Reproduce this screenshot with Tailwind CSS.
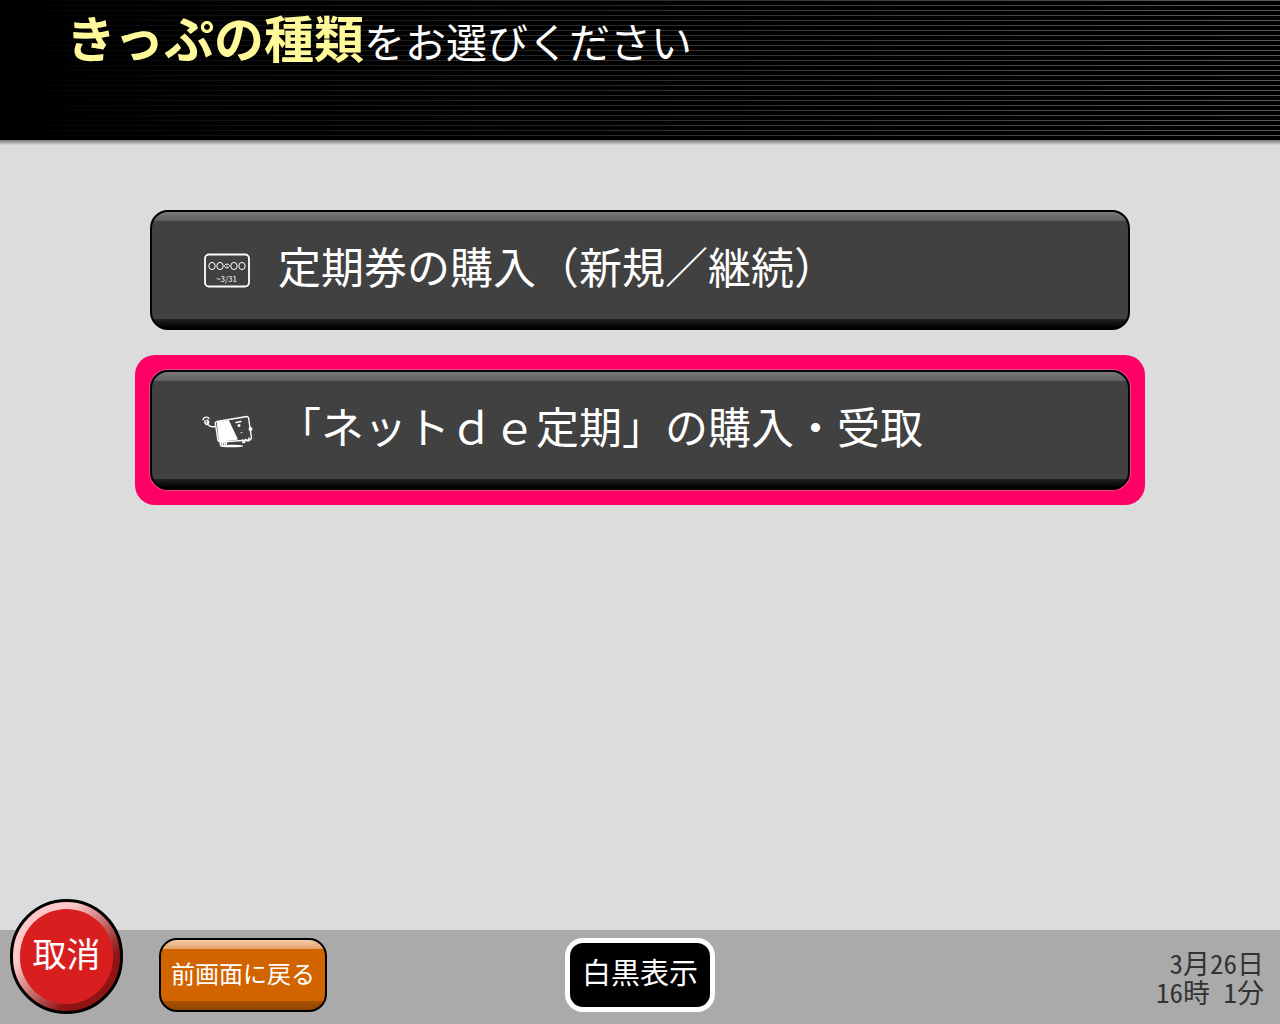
<!DOCTYPE html>
<html lang="ja">
<head>
<meta charset="utf-8">
<meta name="viewport" content="width=device-width, initial-scale=1">
<title>きっぷの種類</title>
<script src="https://cdn.jsdelivr.net/npm/@tailwindcss/browser@4"></script>
</head>
<body class="flex min-h-screen flex-col bg-[#dcdcdc] font-['Noto_Sans_CJK_JP',sans-serif] text-white">

<header class="h-[140px] bg-black bg-[linear-gradient(to_right,#000,transparent),repeating-linear-gradient(to_bottom,#5a5a5a_0px,#5a5a5a_1px,#000_1px,#000_5px)] pl-[66px]">
  <h1 class="text-[41px] leading-[72px] whitespace-nowrap"><strong class="text-[50px] font-bold text-[#fff999]">きっぷの種類</strong>をお選びください</h1>
</header>
<div class="h-[5px] bg-linear-to-b from-[#777] to-[#dcdcdc]"></div>

<main class="flex flex-1 flex-col gap-[10px] px-[135px] pt-[50px]">
  <div class="p-[15px]">
    <button type="button" class="flex h-[120px] w-full items-center rounded-[18px] border-2 border-black bg-[linear-gradient(to_bottom,#7a7a7a_0px,#5e5e5e_9px,#414141_9px,#414141_107px,#222_107px,#000_116px)] pl-[38px] text-[43px] whitespace-nowrap">
      <svg class="h-[60px] w-[80px] shrink-0" viewBox="0 0 80 60" fill="none" stroke="#fff" aria-hidden="true">
        <rect x="15" y="14.500" width="44" height="32" rx="4" stroke-width="1.800"/>
        <g stroke-width="1">
          <ellipse cx="22" cy="26" rx="3.200" ry="3.600"/>
          <ellipse cx="30" cy="26" rx="3.200" ry="3.600"/>
          <ellipse cx="44" cy="26" rx="3.200" ry="3.600"/>
          <ellipse cx="52" cy="26" rx="3.200" ry="3.600"/>
        </g>
        <path d="M34 26l2.300-2.300v1.300h1.400v-1.300L40 26l-2.300 2.300V27h-1.400v1.300z" stroke-width=".7"/>
        <text x="26" y="42" font-size="8" fill="#fff" stroke="none" font-family="'Noto Sans CJK JP', sans-serif">~3/31</text>
      </svg>
      <span class="-mt-[10px] pl-[8px]">定期券の購入（新規／継続）</span>
    </button>
  </div>

  <div class="rounded-[20px] bg-[#ff0066] p-[15px]">
    <button type="button" class="flex h-[120px] w-full items-center rounded-[18px] border-2 border-black bg-[linear-gradient(to_bottom,#7a7a7a_0px,#5e5e5e_9px,#414141_9px,#414141_107px,#222_107px,#000_116px)] pl-[38px] text-[43px] whitespace-nowrap ring-1 ring-[#e05088]">
      <svg class="h-[60px] w-[80px] shrink-0" viewBox="0 0 80 60" fill="none" stroke="#fff" stroke-width="1.400" stroke-linecap="round" stroke-linejoin="round" aria-hidden="true">
        <path d="M27 21.500L57 16.500l1.500 1L61.500 38l-1.500 2-30 2-2-1.500-2.800-18z"/>
        <path d="M27.500 22.500L38.500 21l8.500 18-17.500 2z" fill="#fff"/>
        <path d="M25 26.500c-4 1-7-.5-8-4.500M13 19.500c1-3 5-3 6-1M15 20.500c-1 3 2 5 3 3.500s1-3-1-4"/>
        <path d="M30 42l.5 2.500h2V42M34 42l.5 2h2v-2M52.500 40l.5 2.500h1.500l1-3M56.500 40l.8 1h1l.7-3"/>
        <path d="M46 22.500l5-1"/>
        <circle cx="49" cy="25.500" r="1.500" fill="#fff" stroke="none"/>
        <circle cx="60.500" cy="29" r="2" fill="#fff" stroke="none"/>
        <path d="M51 32.500h1" stroke-width=".8"/>
        <ellipse cx="41.500" cy="46" rx="12" ry="1.300" fill="#fff" stroke="none"/>
      </svg>
      <span class="-mt-[10px] pl-[8px]">「ネットｄｅ定期」の購入・受取</span>
    </button>
  </div>
</main>

<footer class="grid h-[94px] grid-cols-[1fr_150px_1fr] items-start bg-[#aaaaaa]">
  <div class="flex items-start pl-[10px]">
    <button type="button" class="-mt-[31px] mr-[36px] h-[115px] w-[113px] shrink-0 rounded-full border-3 border-black bg-[linear-gradient(135deg,#ffc8c8_30%,#8f1414_72%)] p-[7px] text-[34px]">
      <span class="flex h-full items-center justify-center rounded-full bg-[#d81e1e] pb-[8px] whitespace-nowrap">取消</span>
    </button>
    <button type="button" class="mt-[8px] h-[74px] w-[168px] shrink-0 rounded-[18px] border-2 border-black bg-[linear-gradient(to_bottom,#f8cfa8_0px,#e0a068_9px,#d26400_9px,#d26400_61px,#ac5200_61px,#8f4400_70px)] pb-[4px] text-[24px] whitespace-nowrap">前画面に戻る</button>
  </div>
  <button type="button" class="mt-[8px] h-[74px] rounded-[18px] border-5 border-white bg-black pb-[6px] text-[29px] whitespace-nowrap">白黒表示</button>
  <p class="pt-[18px] pr-[16px] text-right text-[27px] leading-[29px] text-[#333] [font-feature-settings:'hwid']"><time datetime="03-26">3月26日</time><br><time datetime="16:01">16時 1分</time></p>
</footer>
</body>
</html>
